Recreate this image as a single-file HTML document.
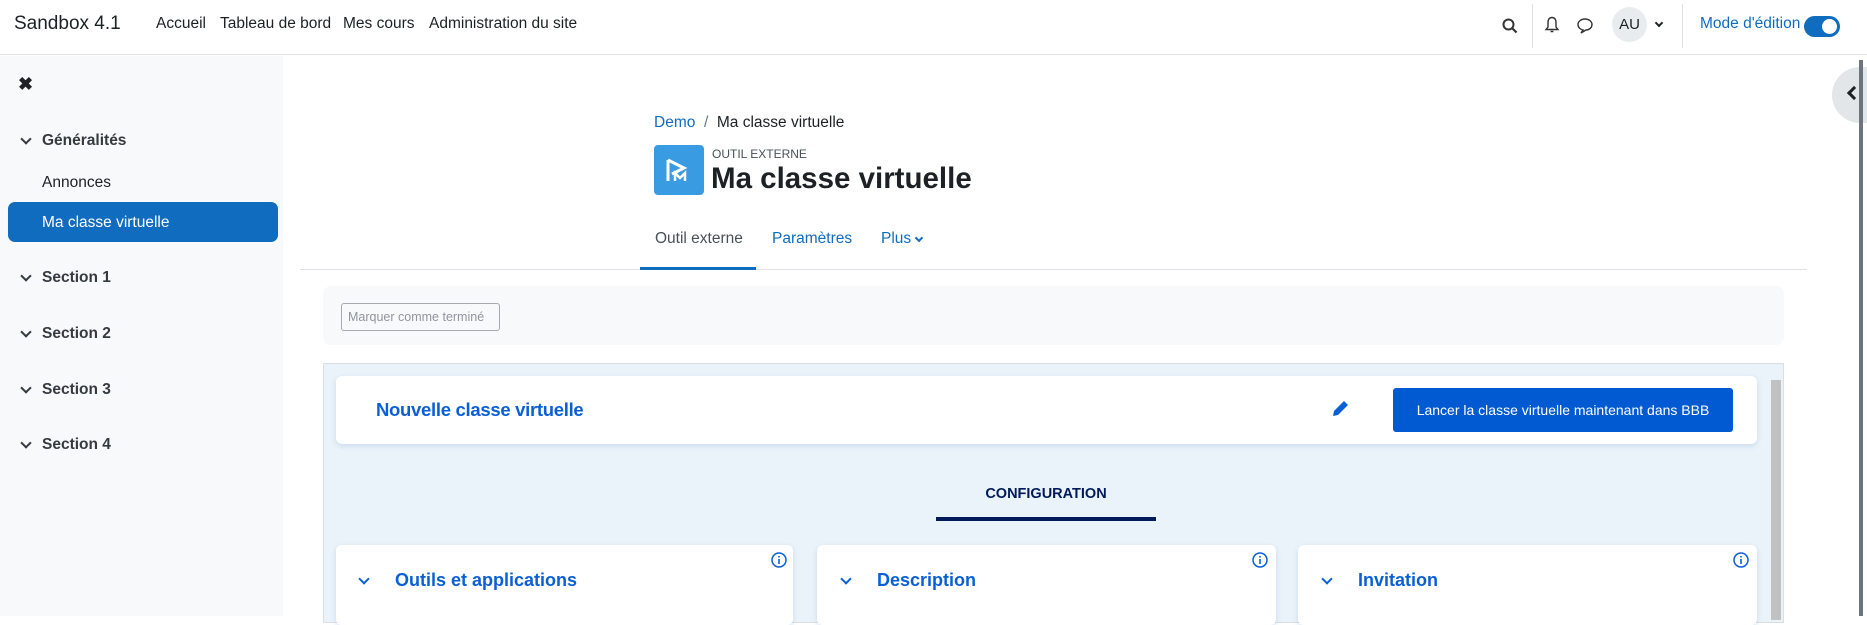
<!DOCTYPE html><html><head><meta charset="utf-8"><style>
*{box-sizing:border-box;margin:0;padding:0}
body{width:1867px;height:616px;overflow:hidden;font-family:"Liberation Sans",sans-serif;background:#fff;position:relative;color:#1d2125}
.a{position:absolute;white-space:nowrap}
.nav{font-size:15.5px;top:15px}
.sb{font-size:15.5px;color:#1d2125}
.sec{font-weight:bold;font-size:15.5px;color:#343a40}
.chev{display:inline-block;width:8px;height:8px;border-right:2px solid #343a40;border-bottom:2px solid #343a40;transform:rotate(45deg)}
</style></head><body>
<div class="a" style="left:0;top:0;width:1867px;height:55px;border-bottom:1px solid #dee2e6"></div>
<div class="a" style="left:14px;top:13px;font-size:19px">Sandbox 4.1</div>
<div class="a nav" style="left:156px">Accueil</div>
<div class="a nav" style="left:220px">Tableau de bord</div>
<div class="a nav" style="left:343px">Mes cours</div>
<div class="a nav" style="left:429px">Administration du site</div>
<svg class="a" style="left:1502px;top:18px" width="16" height="16" viewBox="0 0 16 16"><circle cx="6.5" cy="6.5" r="5" fill="none" stroke="#333" stroke-width="2"/><path d="M10 10l4.5 4.5" stroke="#333" stroke-width="2.2"/></svg>
<div class="a" style="left:1532px;top:4px;width:1px;height:44px;background:#dee2e6"></div>
<svg class="a" style="left:1544px;top:16px" width="16" height="18" viewBox="0 0 16 18"><path d="M8 1.5C5 1.5 4 4 4 6.5V11L2 13.5H14L12 11V6.5C12 4 11 1.5 8 1.5ZM6.5 15.5h3" fill="none" stroke="#333" stroke-width="1.4"/></svg>
<svg class="a" style="left:1576px;top:17px" width="18" height="17" viewBox="0 0 18 17"><path d="M9 2C5 2 2 4.5 2 7.5S4.5 12.5 7 13L5 16 10 13C13.5 12.8 16 10.5 16 7.5S13 2 9 2Z" fill="none" stroke="#333" stroke-width="1.4"/></svg>
<div class="a" style="left:1612px;top:7px;width:35px;height:35px;border-radius:50%;background:#e9ecef;font-size:15px;line-height:35px;text-align:center">AU</div>
<div class="a chev" style="left:1656px;top:20px;width:6px;height:6px;border-color:#1d2125"></div>
<div class="a" style="left:1682px;top:4px;width:1px;height:44px;background:#dee2e6"></div>
<div class="a" style="left:1700px;top:15px;font-size:15.5px;color:#0f6cbf">Mode d'édition</div>
<div class="a" style="left:1804px;top:16px;width:36px;height:21px;border-radius:11px;background:#0f6cbf"><div style="position:absolute;right:3px;top:3px;width:15px;height:15px;border-radius:50%;background:#fff"></div></div>

<div class="a" style="left:0;top:56px;width:283px;height:560px;background:#f8f9fa"></div>
<div class="a" style="left:18px;top:74px;font-size:18px;font-weight:bold">✖</div>
<div class="a chev" style="left:22px;top:135px"></div><div class="a sec" style="left:42px;top:132px">Généralités</div>
<div class="a sb" style="left:42px;top:174px">Annonces</div>
<div class="a" style="left:8px;top:202px;width:270px;height:40px;border-radius:7px;background:#0f6cbf;color:#fff;font-size:15.5px;padding:12px 0 0 34px">Ma classe virtuelle</div>
<div class="a chev" style="left:22px;top:272px"></div><div class="a sec" style="left:42px;top:269px">Section 1</div>
<div class="a chev" style="left:22px;top:328px"></div><div class="a sec" style="left:42px;top:325px">Section 2</div>
<div class="a chev" style="left:22px;top:384px"></div><div class="a sec" style="left:42px;top:381px">Section 3</div>
<div class="a chev" style="left:22px;top:439px"></div><div class="a sec" style="left:42px;top:436px">Section 4</div>

<div class="a" style="left:1832px;top:67px;width:60px;height:56px;border-radius:28px;background:#e3e6e9"></div>
<div class="a" style="left:1849px;top:88px;width:10px;height:10px;border-left:3px solid #1d2125;border-bottom:3px solid #1d2125;transform:rotate(45deg)"></div>
<div class="a" style="left:1859px;top:60px;width:4px;height:556px;background:#6c757d"></div>

<div class="a" style="left:654px;top:114px;font-size:15.5px"><span style="color:#0f6cbf">Demo</span> <span style="color:#6c757d">&nbsp;/&nbsp;</span> Ma classe virtuelle</div>
<div class="a" style="left:654px;top:145px;width:50px;height:50px;border-radius:4px;background:#399be2"><svg width="50" height="50" viewBox="0 0 50 50"><path d="M14 15l16 8-12 6M14 15v21" fill="none" stroke="#fff" stroke-width="3"/><path d="M21 36V28l5 5 5-5v8" fill="none" stroke="#fff" stroke-width="2.5"/></svg></div>
<div class="a" style="left:712px;top:147px;font-size:12px;color:#495057">OUTIL EXTERNE</div>
<div class="a" style="left:711px;top:162px;font-size:29.5px;font-weight:bold">Ma classe virtuelle</div>
<div class="a" style="left:655px;top:230px;font-size:15.5px;color:#495057">Outil externe</div>
<div class="a" style="left:772px;top:230px;font-size:15.5px;color:#0f6cbf">Paramètres</div>
<div class="a" style="left:881px;top:230px;font-size:15.5px;color:#0f6cbf">Plus</div>
<div class="a chev" style="left:916px;top:235px;width:6px;height:6px;border-color:#0f6cbf"></div>
<div class="a" style="left:300px;top:269px;width:1507px;height:1px;background:#dee2e6"></div>
<div class="a" style="left:640px;top:267px;width:116px;height:3px;background:#0f6cbf"></div>

<div class="a" style="left:323px;top:286px;width:1461px;height:59px;border-radius:8px;background:#f8f9fa"></div>
<div class="a" style="left:341px;top:303px;width:159px;height:28px;border:1px solid #a7a9ac;border-radius:3px;font-size:12.5px;color:#8f959e;padding:6px 0 0 6px">Marquer comme terminé</div>

<div class="a" style="left:323px;top:363px;width:1461px;height:260px;background:#ebf3fa;border:1px solid #dadfe3"></div>
<div class="a" style="left:1771px;top:380px;width:10px;height:240px;background:#c1c1c1"></div>
<div class="a" style="left:336px;top:376px;width:1421px;height:68px;border-radius:6px;background:#fff;box-shadow:0 2px 6px rgba(100,150,200,.25)"></div>
<div class="a" style="left:376px;top:399px;font-size:18.5px;font-weight:bold;color:#0b5fd6;letter-spacing:-.3px">Nouvelle classe virtuelle</div>
<svg class="a" style="left:1331px;top:398px" width="20" height="20" viewBox="0 0 20 20"><path d="M2 18l1-5L13 3l4 4L7 17z" fill="#0b5fd6"/></svg>
<div class="a" style="left:1393px;top:388px;width:340px;height:44px;border-radius:3px;background:#025ad2;color:#fff;font-size:14px;text-align:center;line-height:44px">Lancer la classe virtuelle maintenant dans BBB</div>
<div class="a" style="left:936px;top:486px;width:220px;text-align:center;font-size:14.5px;font-weight:bold;color:#001a5a">CONFIGURATION</div>
<div class="a" style="left:936px;top:517px;width:220px;height:4px;background:#001a5a"></div>

<div class="a" style="left:336px;top:545px;width:457px;height:80px;border-radius:6px;background:#fff;box-shadow:0 2px 6px rgba(100,150,200,.25)"></div>
<div class="a" style="left:817px;top:545px;width:459px;height:80px;border-radius:6px;background:#fff;box-shadow:0 2px 6px rgba(100,150,200,.25)"></div>
<div class="a" style="left:1298px;top:545px;width:459px;height:80px;border-radius:6px;background:#fff;box-shadow:0 2px 6px rgba(100,150,200,.25)"></div>
<div class="a chev" style="left:360px;top:575px;border-color:#0b5fd6"></div><div class="a" style="left:395px;top:570px;font-size:18px;font-weight:bold;color:#0b5fd6">Outils et applications</div>
<div class="a chev" style="left:842px;top:575px;border-color:#0b5fd6"></div><div class="a" style="left:877px;top:570px;font-size:18px;font-weight:bold;color:#0b5fd6">Description</div>
<div class="a chev" style="left:1323px;top:575px;border-color:#0b5fd6"></div><div class="a" style="left:1358px;top:570px;font-size:18px;font-weight:bold;color:#0b5fd6">Invitation</div>
<svg class="a" style="left:771px;top:552px" width="16" height="16" viewBox="0 0 16 16"><circle cx="8" cy="8" r="7" fill="none" stroke="#0b5fd6" stroke-width="1.5"/><path d="M8 7v5M8 4v1.5" stroke="#0b5fd6" stroke-width="1.6"/></svg>
<svg class="a" style="left:1252px;top:552px" width="16" height="16" viewBox="0 0 16 16"><circle cx="8" cy="8" r="7" fill="none" stroke="#0b5fd6" stroke-width="1.5"/><path d="M8 7v5M8 4v1.5" stroke="#0b5fd6" stroke-width="1.6"/></svg>
<svg class="a" style="left:1733px;top:552px" width="16" height="16" viewBox="0 0 16 16"><circle cx="8" cy="8" r="7" fill="none" stroke="#0b5fd6" stroke-width="1.5"/><path d="M8 7v5M8 4v1.5" stroke="#0b5fd6" stroke-width="1.6"/></svg>
</body></html>
